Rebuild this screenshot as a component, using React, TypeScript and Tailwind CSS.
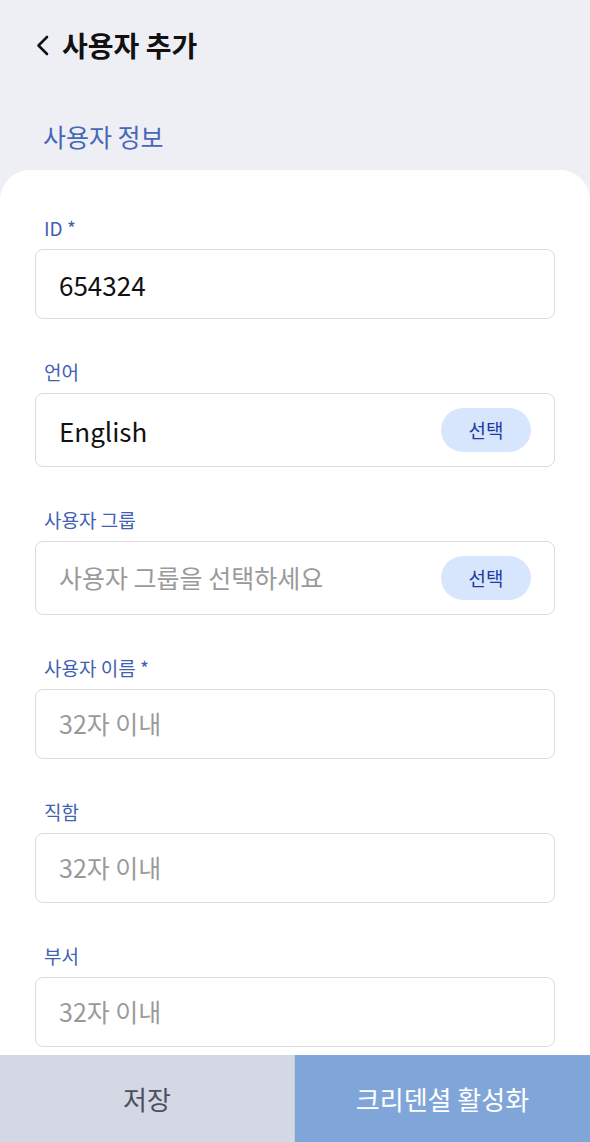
import React from "react";

const font = { fontFamily: '"Noto Sans CJK KR", "Noto Sans", sans-serif' };

type FieldProps = {
  label: string;
  value?: string;
  placeholder?: string;
  select?: boolean;
  tall?: boolean;
};

function Field({ label, value, placeholder, select, tall }: FieldProps) {
  return (
    <div className="flex flex-col">
      <div className="text-[19px] leading-[24px] text-[#3f5fb3] pl-[9px]">{label}</div>
      <div
        className={
          "mt-[9px] flex items-center justify-between rounded-[8px] border border-[#dcdcdf] bg-white pl-[23px] pr-[23px] " +
          (tall ? "h-[74px]" : "h-[70px]")
        }
      >
        {value ? (
          <span className="text-[26px] text-[#111]">{value}</span>
        ) : (
          <span className="text-[25px] text-[#9a9a9a]">{placeholder}</span>
        )}
        {select && (
          <button className="h-[44px] w-[90px] rounded-full bg-[#d8e6fd] text-[19px] text-[#1d3c9f]">
            선택
          </button>
        )}
      </div>
    </div>
  );
}

export default function App() {
  return (
    <div className="w-[590px] h-[1142px] bg-[#eeeff5] flex flex-col overflow-hidden" style={font}>
      {/* Header */}
      <div className="h-[90px] flex items-center pl-[35px]">
        <svg width="16" height="24" viewBox="0 0 16 24" className="mr-[11px]">
          <path d="M12 4 L3.5 12.5 L12 21" fill="none" stroke="#111" strokeWidth="2.6" strokeLinecap="round" strokeLinejoin="round" />
        </svg>
        <h1 className="text-[28px] font-bold text-[#111] leading-[36px]">사용자 추가</h1>
      </div>

      <div className="h-[80px] pt-[30px] pl-[43px]">
        <div className="text-[25px] leading-[32px] text-[#4767b9]">사용자 정보</div>
      </div>

      {/* Card */}
      <div className="flex-1 bg-white rounded-t-[30px] px-[35px] pt-[46px] flex flex-col gap-[41px]">
        <Field label="ID *" value="654324" />
        <Field label="언어" value="English" select tall />
        <Field label="사용자 그룹" placeholder="사용자 그룹을 선택하세요" select tall />
        <Field label="사용자 이름 *" placeholder="32자 이내" />
        <Field label="직함" placeholder="32자 이내" />
        <Field label="부서" placeholder="32자 이내" />
      </div>

      {/* Bottom bar */}
      <div className="h-[87px] flex shrink-0">
        <button className="w-[295px] bg-[#d4d8e4] text-[26px] text-[#4b5060] border-r border-[#c7cbd6]">저장</button>
        <button className="flex-1 bg-[#80a6d9] text-[26px] text-white">크리덴셜 활성화</button>
      </div>
    </div>
  );
}
